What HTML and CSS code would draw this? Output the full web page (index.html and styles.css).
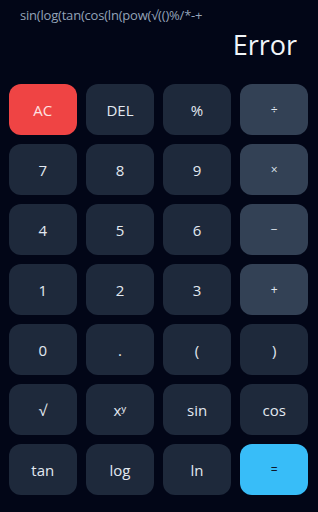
FILE: index.html
```html
<!DOCTYPE html>
<html lang="en">
<head>
    <meta charset="UTF-8">
    <meta name="viewport" content="width=device-width, initial-scale=1.0">
    <title>Scientific Calculator</title>
    <link rel="stylesheet" href="styles.css">
</head>
<body>
    <div class="calculator">
        <div class="display">
            <div class="expression">sin(log(tan(cos(ln(pow(√(()%/*-+</div>
            <div class="result">Error</div>
        </div>
        <div class="buttons">
            <button class="clear">AC</button>
            <button>DEL</button>
            <button>%</button>
            <button class="operator">÷</button>
            <button>7</button>
            <button>8</button>
            <button>9</button>
            <button class="operator">×</button>
            <button>4</button>
            <button>5</button>
            <button>6</button>
            <button class="operator">−</button>
            <button>1</button>
            <button>2</button>
            <button>3</button>
            <button class="operator">+</button>
            <button>0</button>
            <button>.</button>
            <button>(</button>
            <button>)</button>
            <button>√</button>
            <button>xʸ</button>
            <button>sin</button>
            <button>cos</button>
            <button>tan</button>
            <button>log</button>
            <button>ln</button>
            <button class="equal">=</button>
        </div>
    </div>
</body>
</html>
```

FILE: styles.css
```css
body {
    margin: 0;
    background: #020617;
    font-family: "Open Sans", "Noto Sans", sans-serif;
    color: #e2e8f0;
}
.calculator {
    width: 318px;
    height: 512px;
}
.display {
    padding: 6px 21px 0 20px;
    height: 78px;
    box-sizing: border-box;
}
.expression {
    font-size: 13px;
    color: #94a3b8;
    line-height: 18px;
    white-space: nowrap;
    letter-spacing: -0.2px;
}
.result {
    text-align: right;
    font-size: 27px;
    color: #f1f5f9;
    line-height: 40px;
    margin-top: 1px;
}
.buttons {
    display: grid;
    grid-template-columns: repeat(4, 1fr);
    gap: 9px 9.5px;
    padding: 6px 10px 0 9px;
}
button {
    height: 51px;
    border: none;
    border-radius: 12px;
    background: #1e293b;
    color: #e2e8f0;
    font-family: inherit;
    font-size: 15px;
    cursor: pointer;
}
.operator {
    background: #334155;
    font-size: 12px;
}
.clear {
    background: #ef4444;
    color: #fee2e2;
}
.equal {
    background: #38bdf8;
    color: #0f172a;
    font-size: 12px;
}
```
